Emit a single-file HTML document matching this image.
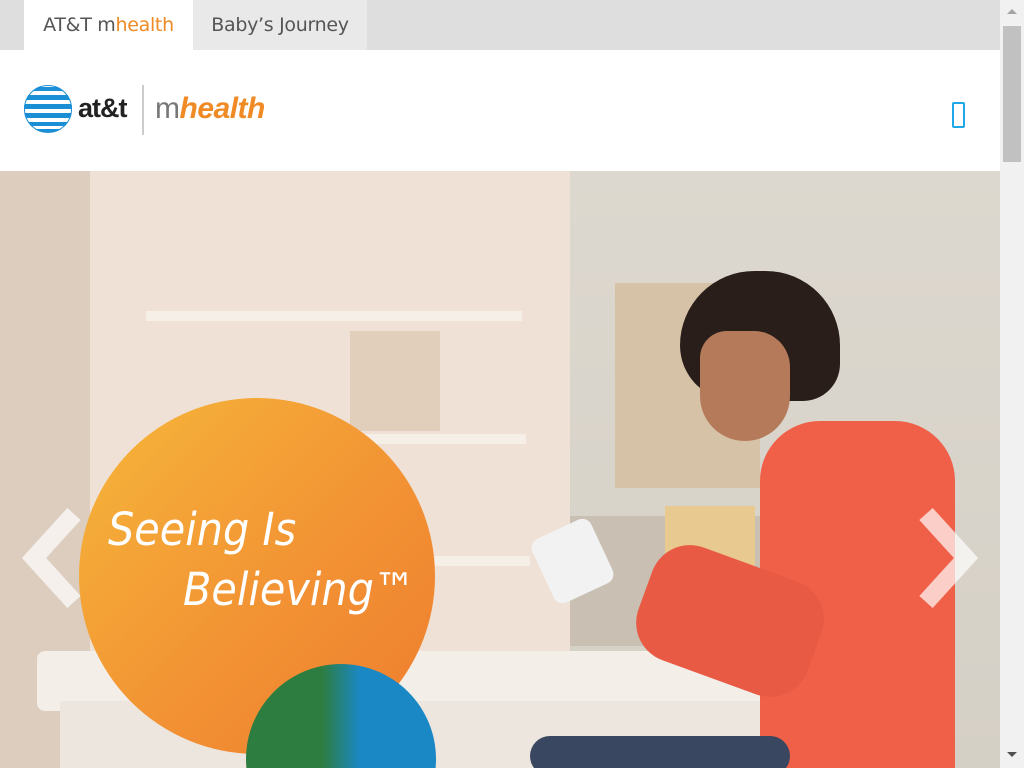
<!DOCTYPE html>
<html><head><style>
*{margin:0;padding:0;box-sizing:border-box}
html,body{width:1024px;height:768px;overflow:hidden}
body{background:#fff;font-family:"Liberation Sans","DejaVu Sans",sans-serif;position:relative}
.tabs{position:absolute;left:0;top:0;width:1000px;height:50px;background:#dedede}
.tab{position:absolute;top:0;height:50px;line-height:50px;color:#555;font-family:"DejaVu Sans",sans-serif;letter-spacing:-0.3px}
.t1{left:24px;width:169px;background:#fff;text-align:center;font-size:19px}
.t2{left:193px;width:174px;background:#e9e9e9;text-align:center;font-size:19px}
.o{color:#f08a24}
.hdr{position:absolute;top:50px;left:0;width:1000px;height:121px;background:#fff}
.sb{position:absolute;right:0;top:0;width:24px;height:768px;background:#f1f1f1}
.thumb{position:absolute;right:3px;top:26px;width:18px;height:136px;background:#c1c1c1}
.hero{position:absolute;top:171px;left:0;width:1000px;height:597px;overflow:hidden;background:#efe1d5}
</style></head><body>
<div class="tabs">
<div class="tab t1">AT&amp;T m<span class="o">health</span></div>
<div class="tab t2">Baby’s Journey</div>
</div>
<div class="hdr">
<svg style="position:absolute;left:24px;top:35px" width="48" height="48" viewBox="0 0 48 48">
<defs><clipPath id="c"><circle cx="24" cy="24" r="24"/></clipPath></defs>
<circle cx="24" cy="24" r="24" fill="#fff"/>
<g clip-path="url(#c)" fill="#1a8fd6">
<rect x="0" y="2" width="48" height="4"/><rect x="0" y="10" width="48" height="5"/><rect x="0" y="19" width="48" height="5"/><rect x="0" y="28" width="48" height="5"/><rect x="0" y="37" width="48" height="4"/><rect x="0" y="44" width="48" height="3"/>
</g>
<circle cx="24" cy="24" r="23.5" fill="none" stroke="#1a8fd6" stroke-width="1"/>
</svg>
<div style="position:absolute;left:78px;top:43px;font-size:27px;font-weight:bold;color:#222;letter-spacing:-1px">at&amp;t</div>
<div style="position:absolute;left:142px;top:35px;width:2px;height:50px;background:#ccc"></div>
<div style="position:absolute;left:155px;top:42px;font-size:30px;color:#777;letter-spacing:-0.5px">m<i class="o" style="font-weight:bold;color:#f08a24">health</i></div>
<div style="position:absolute;left:952px;top:52px;width:13px;height:26px;border:2px solid #20a8e8;border-radius:2px"></div>
</div>
<div class="hero">
<div style="position:absolute;left:0;top:0;width:90px;height:597px;background:#dccdbf"></div>
<div style="position:absolute;left:570px;top:0;width:430px;height:597px;background:linear-gradient(#ddd8cf,#d5d0c6)"></div>
<div style="position:absolute;left:146px;top:140px;width:376px;height:10px;background:#f6efe8"></div>
<div style="position:absolute;left:200px;top:263px;width:326px;height:10px;background:#f6efe8"></div>
<div style="position:absolute;left:430px;top:385px;width:100px;height:10px;background:#f6efe8"></div>
<div style="position:absolute;left:350px;top:160px;width:90px;height:100px;background:#d8c3aa;opacity:.6"></div>
<div style="position:absolute;left:615px;top:112px;width:145px;height:205px;background:#d6c2a6"></div>
<div style="position:absolute;left:570px;top:345px;width:200px;height:130px;background:#c9bfb3"></div>
<div style="position:absolute;left:665px;top:335px;width:90px;height:80px;background:#e8c98f"></div>
<div style="position:absolute;left:37px;top:480px;width:740px;height:60px;background:#f4eee8;border-radius:8px"></div>
<div style="position:absolute;left:60px;top:530px;width:700px;height:67px;background:#ede6df"></div>
<div style="position:absolute;left:680px;top:100px;width:160px;height:130px;background:#2a1e1a;border-radius:80px 80px 40px 60px"></div>
<div style="position:absolute;left:700px;top:160px;width:90px;height:110px;background:#b57a5a;border-radius:30px 40px 50px 50px"></div>
<div style="position:absolute;left:760px;top:250px;width:195px;height:347px;background:#f06048;border-radius:60px 60px 0 0"></div>
<div style="position:absolute;left:640px;top:390px;width:180px;height:120px;background:#e85a44;border-radius:40px;transform:rotate(20deg)"></div>
<div style="position:absolute;left:530px;top:565px;width:260px;height:40px;background:#3a4760;border-radius:20px"></div>
<div style="position:absolute;left:540px;top:355px;width:65px;height:70px;background:#f2f2f2;border-radius:10px;transform:rotate(-25deg)"></div>
<div style="position:absolute;left:79px;top:227px;width:356px;height:356px;border-radius:50%;background:linear-gradient(135deg,#f6b73a,#f29334 55%,#ee7c2e)"></div>
<div style="position:absolute;left:246px;top:493px;width:190px;height:190px;border-radius:50%;background:linear-gradient(90deg,#2e7d40 40%,#1a88c4 60%)"></div>
<div style="position:absolute;left:108px;top:332px;font-size:45px;font-style:italic;color:#fff;letter-spacing:0px;font-family:'DejaVu Sans',sans-serif;font-weight:200;transform:scaleX(0.92);transform-origin:left">Seeing Is</div>
<div style="position:absolute;left:183px;top:392px;font-size:45px;font-style:italic;color:#fff;letter-spacing:0px;font-family:'DejaVu Sans',sans-serif;transform:scaleX(0.92);transform-origin:left">Believing™</div>
<svg style="position:absolute;left:22px;top:335px" width="60" height="105"><path d="M52 8 L12 52 L52 96" fill="none" stroke="#fff" stroke-opacity=".7" stroke-width="18"/></svg>
<svg style="position:absolute;left:918px;top:335px" width="60" height="105"><path d="M8 8 L48 52 L8 96" fill="none" stroke="#fff" stroke-opacity=".7" stroke-width="18"/></svg>
</div>
<div class="sb"><div class="thumb"></div>
<div style="position:absolute;left:7px;top:9px;border:5px solid transparent;border-bottom:5px solid #a3a3a3;border-top:0"></div>
<div style="position:absolute;left:7px;top:752px;border:5px solid transparent;border-top:5px solid #505050;border-bottom:0"></div>
</div>
</body></html>
